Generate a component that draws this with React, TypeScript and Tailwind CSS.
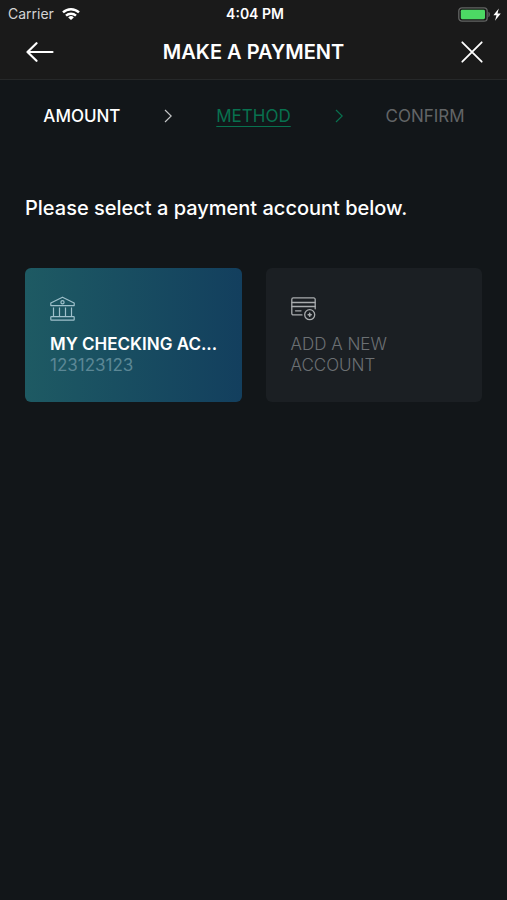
const BackIcon = () => (
  <svg className="h-5 w-7" viewBox="0 0 28 20" fill="none" stroke="currentColor" strokeWidth="2.2" strokeLinecap="round" strokeLinejoin="round">
    <path d="M10.5 1.2 1.5 10l9 8.8M1.5 10h25" />
  </svg>
);

const CloseIcon = () => (
  <svg className="h-6 w-6" viewBox="0 0 24 24" fill="none" stroke="currentColor" strokeWidth="1.8" strokeLinecap="round">
    <path d="m2.3 2.3 19.4 19.4M21.7 2.3 2.3 21.7" />
  </svg>
);

const ChevronIcon = () => (
  <svg className="h-[14px] w-2" viewBox="0 0 8 14" fill="none" stroke="currentColor" strokeWidth="1.2" aria-hidden="true">
    <path d="M1 1 7.2 7 1 13" />
  </svg>
);

const WifiIcon = () => (
  <svg className="h-3 w-[18px]" viewBox="0 0 18 12" fill="none" stroke="currentColor" strokeWidth="2.4" aria-hidden="true">
    <path d="M1 4.4a11.6 11.6 0 0 1 16 0" />
    <path d="M4 7.7a7.3 7.3 0 0 1 10 0" />
    <path d="M9 12 6.2 9.4a4.1 4.1 0 0 1 5.6 0z" fill="currentColor" stroke="none" />
  </svg>
);

const BatteryIcon = () => (
  <svg className="h-[15px] w-11" viewBox="0 0 44 15" aria-hidden="true">
    <rect x="0.8" y="0.8" width="28.4" height="13.4" rx="3.2" fill="none" stroke="#626463" strokeWidth="1.3" />
    <rect x="2.8" y="2.8" width="24.2" height="9.4" rx="1.4" fill="#4cd964" />
    <path d="M30.4 4.8c2 .8 2 4.6 0 5.4z" fill="#626463" />
    <path d="M40.8 1.4 35.4 8.3h3.1l-1.5 5.5 5.8-7.3h-3.3z" fill="#fff" />
  </svg>
);

const BankIcon = () => (
  <svg className="h-[25px] w-[25px]" viewBox="0 0 25 25" fill="none" stroke="currentColor" strokeWidth="1.2" strokeLinejoin="round" aria-hidden="true">
    <path d="M12.5 1.2.8 7v2.6h23.4V7z" />
    <circle cx="12.5" cy="6.2" r="1.6" />
    <path d="M3.5 11.5v9M9.5 11.5v9M15.5 11.5v9M21.5 11.5v9" />
    <rect x="0.8" y="20.6" width="23.4" height="3.5" rx="0.6" />
  </svg>
);

const CardIcon = () => (
  <svg className="h-[25px] w-[25px]" viewBox="0 0 25 25" fill="none" stroke="currentColor" strokeWidth="1.3" strokeLinecap="round" aria-hidden="true">
    <path d="M11 18.9H2.3a1.5 1.5 0 0 1-1.5-1.5V3.4a1.5 1.5 0 0 1 1.5-1.5h20.4a1.5 1.5 0 0 1 1.5 1.5v9.4" />
    <path d="M1 6.5h23M1 10.5h23M4.5 14.8H10" />
    <circle cx="18.7" cy="18.7" r="5" />
    <path d="M18.7 17.2v3M17.2 18.7h3" strokeWidth="1.6" />
  </svg>
);

export default function App() {
  return (
    <div className="min-h-screen bg-[#121619] font-['Inter',sans-serif] text-white">
      <header className="border-b border-[#262829] bg-[#1a1a1a]">
        <div className="flex items-center justify-between pt-1 pr-[5px] pl-2 text-sm leading-5">
          <div className="flex flex-1 items-center gap-2">
            <span className="text-[#d4d4d4]">Carrier</span>
            <WifiIcon />
          </div>
          <span className="font-semibold">4:04 PM</span>
          <div className="flex flex-1 justify-end">
            <BatteryIcon />
          </div>
        </div>
        <div className="flex h-[55px] items-center justify-between px-[23px]">
          <button type="button" aria-label="Back" className="flex w-[34px] justify-center">
            <BackIcon />
          </button>
          <h1 className="text-xl font-semibold">MAKE A PAYMENT</h1>
          <button type="button" aria-label="Close" className="flex w-[34px] justify-end">
            <CloseIcon />
          </button>
        </div>
      </header>

      <nav aria-label="Payment steps" className="px-[39px] pt-6">
        <ol className="grid grid-cols-5 items-center justify-items-center text-[17px] leading-6">
          <li className="font-medium">AMOUNT</li>
          <li className="text-[#c4c6c7]">
            <ChevronIcon />
          </li>
          <li className="text-[#08714f] underline decoration-1 underline-offset-4" aria-current="step">METHOD</li>
          <li className="text-[#08714f]">
            <ChevronIcon />
          </li>
          <li className="text-[#626567]">CONFIRM</li>
        </ol>
      </nav>

      <main className="px-[25px] pt-16">
        <p className="text-xl leading-8 font-medium">Please select a payment account below.</p>
        <div className="mt-11 grid grid-cols-2 gap-6">
          <button type="button" className="flex h-[134px] flex-col rounded-md bg-linear-to-r from-[#1e5a63] to-[#133f5e] px-[25px] pt-7 text-left text-[17px] leading-[21px]">
            <span className="text-[#9fc0cb]">
              <BankIcon />
            </span>
            <span className="mt-[13px] font-semibold whitespace-nowrap">MY CHECKING AC...</span>
            <span className="text-[#5b8795]">123123123</span>
          </button>
          <button type="button" className="flex h-[134px] flex-col rounded-md bg-[#1b1f23] px-[25px] pt-7 text-left text-[17px] leading-[21px] text-[#6c7073]">
            <span className="text-[#a9acae]">
              <CardIcon />
            </span>
            <span className="mt-[13px] w-28 font-light">ADD A NEW ACCOUNT</span>
          </button>
        </div>
      </main>
    </div>
  );
}
